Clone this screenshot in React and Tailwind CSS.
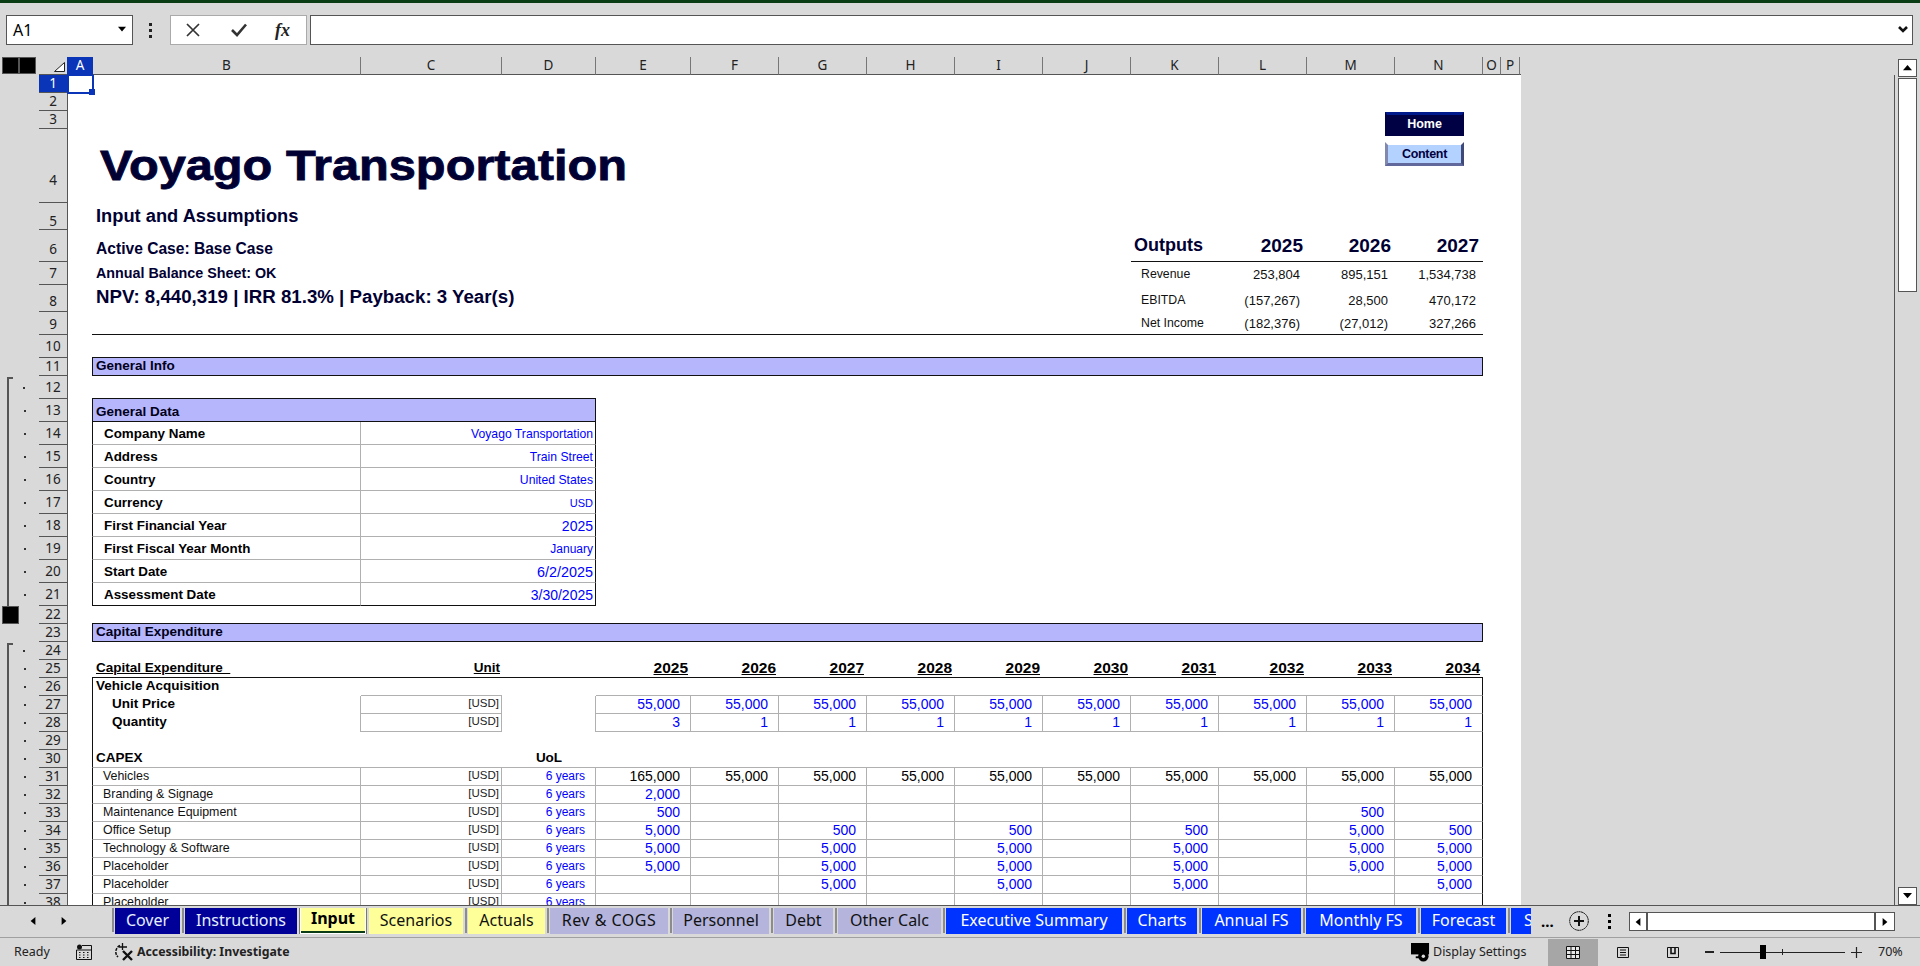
import React from "react";

const ARIAL = "font-['Liberation_Sans',Arial,sans-serif]";
const UI = "font-['Noto_Sans',sans-serif]";

const COLS = [
  ["A", "w-[26px]"], ["B", "w-[268px]"], ["C", "w-[141px]"], ["D", "w-[94px]"], ["E", "w-[95px]"],
  ["F", "w-[88px]"], ["G", "w-[88px]"], ["H", "w-[88px]"], ["I", "w-[88px]"], ["J", "w-[88px]"],
  ["K", "w-[88px]"], ["L", "w-[88px]"], ["M", "w-[88px]"], ["N", "w-[88px]"], ["O", "w-[18px]"], ["P", "w-[19px]"],
];

const GRID = "grid h-full w-[1453px] bg-white leading-none grid-rows-[minmax(0,1fr)] grid-cols-[24px_269px_141px_94px_95px_repeat(9,88px)_18px_20px]";

const TABS = [
  { name: "Cover", w: "w-[65px]", c: "bg-[#000099] text-[#e6f0ff]" },
  { name: "Instructions", w: "w-[112px]", c: "bg-[#000099] text-[#e6f0ff]" },
  { name: "Input", w: "w-[68px]", c: "", active: true },
  { name: "Scenarios", w: "w-[94px]", c: "bg-[#ffff99] text-[#111]" },
  { name: "Actuals", w: "w-[77px]", c: "bg-[#ffff99] text-[#111]" },
  { name: "Rev & COGS", w: "w-[118px]", c: "bg-[#b4b4dc] text-[#111] tracking-[0.5px]" },
  { name: "Personnel", w: "w-[96px]", c: "bg-[#b4b4dc] text-[#111]" },
  { name: "Debt", w: "w-[59px]", c: "bg-[#b4b4dc] text-[#111]" },
  { name: "Other Calc", w: "w-[103px]", c: "bg-[#b4b4dc] text-[#111]" },
  { name: "Executive Summary", w: "w-[176px]", c: "bg-[#0033ff] text-white" },
  { name: "Charts", w: "w-[70px]", c: "bg-[#0033ff] text-white" },
  { name: "Annual FS", w: "w-[99px]", c: "bg-[#0033ff] text-white" },
  { name: "Monthly FS", w: "w-[110px]", c: "bg-[#0033ff] text-white" },
  { name: "Forecast", w: "w-[85px]", c: "bg-[#0033ff] text-white" },
];

const GENERAL = [
  ["Company Name", "Voyago Transportation", "text-[12.2px]"],
  ["Address", "Train Street", "text-[12.2px]"],
  ["Country", "United States", "text-[12.2px]"],
  ["Currency", "USD", "text-[11px]"],
  ["First Financial Year", "2025", "text-[14px]"],
  ["First Fiscal Year Month", "January", "text-[12px]"],
  ["Start Date", "6/2/2025", "text-[14.4px]"],
  ["Assessment Date", "3/30/2025", "text-[14px]"],
];

const YEARS = ["2025", "2026", "2027", "2028", "2029", "2030", "2031", "2032", "2033", "2034"];
const F = "5,000";
const CAPEX = [
  ["Vehicles", ["165,000", "55,000", "55,000", "55,000", "55,000", "55,000", "55,000", "55,000", "55,000", "55,000"], true],
  ["Branding & Signage", ["2,000", "", "", "", "", "", "", "", "", ""]],
  ["Maintenance Equipment", ["500", "", "", "", "", "", "", "", "500", ""]],
  ["Office Setup", [F, "", "500", "", "500", "", "500", "", F, "500"]],
  ["Technology & Software", [F, "", F, "", F, "", F, "", F, F]],
  ["Placeholder", [F, "", F, "", F, "", F, "", F, F]],
  ["Placeholder", ["", "", F, "", F, "", F, "", "", F]],
  ["Placeholder", ["", "", "", "", "", "", "", "", "", ""]],
];

function Tri({ dir, className }) {
  const pts = { up: "0,7 5,1 10,7", down: "0,1 5,7 10,1", left: "8,0 8,10 2,5", right: "2,0 2,10 8,5" };
  return (
    <svg viewBox="0 0 10 10" className={className} fill="#000">
      <polygon points={pts[dir]} />
    </svg>
  );
}

function Row({ n, h, pb = "pb-[1px]", outline, dot, active, children }) {
  return (
    <div className={`flex shrink-0 ${h}`}>
      <div className="flex w-[39px] shrink-0 items-center">
        {outline === "line" && <div className="ml-[7px] h-full w-[2px] bg-[#555]" />}
        {outline === "start" && (
          <div className="ml-[7px] mt-[2px] h-full w-[6px] border-l-2 border-t-2 border-[#555]" />
        )}
        {outline === "end" && <div className="ml-[2px] h-full w-[17px] border border-[#555] bg-black" />}
        {dot && (
          <div className={`h-[2px] w-[2px] bg-[#333] ${outline === "start" ? "ml-[10px]" : "ml-[15px]"}`} />
        )}
      </div>
      <div
        className={`flex w-[29px] shrink-0 items-end justify-center border-r border-b border-r-[#555] border-b-[#555] text-[13.5px] leading-[16px] ${UI} ${pb} ${
          active ? "bg-[#0a35b8] text-white" : "text-[#222]"
        }`}
      >
        {n}
      </div>
      <div className={GRID}>{children}</div>
    </div>
  );
}

function Section({ title }) {
  return (
    <>
      <div />
      <div className="col-span-13 -mt-px flex items-center border border-[#111] bg-[#b6b6fc] pb-[2px] pl-[3px] text-[13.5px] font-bold text-[#00001a]">
        {title}
      </div>
    </>
  );
}

function YearCell({ v, blue, i }) {
  return (
    <div
      className={`flex items-center justify-end border-b border-r border-b-[#b0b0b0] pb-[2px] pr-[10px] text-[14px] ${
        i === 9 ? "border-r-[#111]" : "border-r-[#b0b0b0]"
      } ${blue ? "text-[#0000ff]" : "text-black"}`}
    >
      {v}
    </div>
  );
}

function Unit() {
  return (
    <div className="flex items-center justify-end border-b border-r border-[#b0b0b0] pb-[2px] pr-[2px] text-[11.5px] text-[#222]">
      [USD]
    </div>
  );
}

function Blank({ c = "" }) {
  return <div className={c} />;
}

function OutputRow({ label, vals, pt }) {
  return (
    <>
      <div className={`col-start-11 flex items-center pl-[10px] text-[12.3px] text-[#111] ${pt}`}>{label}</div>
      {vals.map((v, i) => (
        <div key={i} className={`flex items-center justify-end pr-[7px] text-[13px] text-[#111] ${pt}`}>
          {v}
        </div>
      ))}
    </>
  );
}

function Sheet() {
  return (
    <div className={`relative flex h-[830px] w-[1895px] flex-col overflow-hidden border-r border-[#555] ${ARIAL}`}>
      <Row n="1" h="h-[18px]" active><Blank /></Row>
      <Row n="2" h="h-[18px]"><Blank /></Row>
      <Row n="3" h="h-[18px]"><Blank /></Row>
      <Row n="4" h="h-[74px]" pb="pb-[14px]">
        <Blank />
        <div className="col-span-9 flex items-center pl-[8px]">
          <span className="origin-left scale-x-[1.16] whitespace-nowrap text-[42px] font-bold text-[#000033] [-webkit-text-stroke:0.8px_#000033]">
            Voyago Transportation
          </span>
        </div>
      </Row>
      <Row n="5" h="h-[27px]" pb="pb-[0px]">
        <Blank />
        <div className="col-span-5 flex items-center pl-[4px] text-[18.3px] font-bold text-[#000033]">
          Input and Assumptions
        </div>
      </Row>
      <Row n="6" h="h-[32px]" pb="pb-[4px]">
        <Blank />
        <div className="col-span-5 flex items-center pl-[4px] pt-[5px] text-[15.6px] font-bold text-[#000033]">
          Active Case: Base Case
        </div>
        <div className="col-start-11 flex items-center border-b border-[#111] pb-[1px] pl-[3px] text-[18px] font-bold text-[#000033]">
          Outputs
        </div>
        {["2025", "2026", "2027"].map((y) => (
          <div key={y} className="flex items-center justify-end border-b border-[#111] pb-[1px] pr-[4px] text-[19px] font-bold text-[#000033]">
            {y}
          </div>
        ))}
      </Row>
      <Row n="7" h="h-[23px]" pb="pb-[3px]">
        <Blank />
        <div className="col-span-5 flex items-center pl-[4px] text-[14.3px] font-bold text-[#000033]">
          Annual Balance Sheet: OK
        </div>
        <OutputRow label="Revenue" pt="pt-[2px]" vals={["253,804", "895,151", "1,534,738"]} />
      </Row>
      <Row n="8" h="h-[27px]" pb="pb-[2px]">
        <Blank />
        <div className="col-span-8 flex items-start pl-[4px] pt-[3px] text-[18.7px] font-bold text-[#000033]">
          NPV: 8,440,319 | IRR 81.3% | Payback: 3 Year(s)
        </div>
        <OutputRow label="EBITDA" pt="pt-[4px]" vals={["(157,267)", "28,500", "470,172"]} />
      </Row>
      <Row n="9" h="h-[23px]" pb="pb-[2px]">
        <Blank />
        <div className="col-span-9 border-b border-[#111]" />
        <div className="col-start-11 flex items-center border-b border-[#111] pl-[10px] text-[12.3px] text-[#111]">
          Net Income
        </div>
        {["(182,376)", "(27,012)", "327,266"].map((v) => (
          <div key={v} className="flex items-center justify-end border-b border-[#111] pr-[7px] text-[13px] text-[#111]">
            {v}
          </div>
        ))}
      </Row>
      <Row n="10" h="h-[23px]" pb="pb-[3px]"><Blank /></Row>
      <Row n="11" h="h-[18px]"><Section title="General Info" /></Row>
      <Row n="12" h="h-[23px]" pb="pb-[3px]" outline="start" dot><Blank /></Row>
      <Row n="13" h="h-[23px]" pb="pb-[3px]" outline="line" dot>
        <Blank />
        <div className="col-span-3 -mt-px flex items-center border border-[#111] bg-[#b6b6fc] pl-[3px] pt-[4px] text-[13.5px] font-bold text-[#00001a]">
          General Data
        </div>
      </Row>
      {GENERAL.map(([label, val, size], i) => {
        const last = i === GENERAL.length - 1;
        return (
          <Row key={label} n={14 + i} h="h-[23px]" pb="pb-[3px]" outline="line" dot>
            <Blank />
            <div
              className={`flex items-center border-b border-l border-r border-l-[#111] border-r-[#b0b0b0] pl-[11px] pt-[2px] text-[13.4px] font-bold text-black ${
                last ? "border-b-[#111]" : "border-b-[#b0b0b0]"
              }`}
            >
              {label}
            </div>
            <div
              className={`col-span-2 flex items-center justify-end border-b border-r border-r-[#111] pr-[2px] pt-[2px] text-[#0000ff] ${size} ${
                last ? "border-b-[#111]" : "border-b-[#b0b0b0]"
              }`}
            >
              {val}
            </div>
          </Row>
        );
      })}
      <Row n="22" h="h-[18px]" outline="end"><Blank /></Row>
      <Row n="23" h="h-[18px]"><Section title="Capital Expenditure" /></Row>
      <Row n="24" h="h-[18px]" outline="start" dot><Blank /></Row>
      <Row n="25" h="h-[18px]" outline="line" dot>
        <Blank />
        <div className="flex items-center whitespace-pre border-b border-[#111] pb-[2px] pl-[4px] text-[13.5px] font-bold text-black underline">
          {"Capital Expenditure  "}
        </div>
        <div className="flex items-center justify-end border-b border-[#111] pb-[2px] pr-[2px] text-[13.5px] font-bold text-black underline">
          Unit
        </div>
        <div className="border-b border-[#111]" />
        {YEARS.map((y) => (
          <div key={y} className="flex items-center justify-end border-b border-[#111] pb-[2px] pr-[3px] text-[15.5px] font-bold text-black underline">
            {y}
          </div>
        ))}
      </Row>
      <Row n="26" h="h-[18px]" outline="line" dot>
        <Blank />
        <div className="flex items-center border-l border-[#111] pb-[2px] pl-[3px] text-[13.5px] font-bold text-black">
          Vehicle Acquisition
        </div>
        <div className="border-b border-[#b0b0b0]" />
        <div />
        {YEARS.map((y, i) => (
          <div key={y} className={`border-b border-b-[#b0b0b0] ${i === 9 ? "border-r border-r-[#111]" : ""}`} />
        ))}
      </Row>
      {[
        ["Unit Price", ["55,000", "55,000", "55,000", "55,000", "55,000", "55,000", "55,000", "55,000", "55,000", "55,000"]],
        ["Quantity", ["3", "1", "1", "1", "1", "1", "1", "1", "1", "1"]],
      ].map(([label, vals], r) => (
        <Row key={label} n={27 + r} h="h-[18px]" outline="line" dot>
          <Blank />
          <div className="flex items-center border-l border-r border-l-[#111] border-r-[#b0b0b0] pb-[2px] pl-[19px] text-[13.5px] font-bold text-black">
            {label}
          </div>
          <Unit />
          <div className="border-r border-[#b0b0b0]" />
          {vals.map((v, i) => (
            <YearCell key={i} v={v} i={i} blue />
          ))}
        </Row>
      ))}
      <Row n="29" h="h-[18px]" outline="line" dot>
        <Blank />
        <div className="col-span-13 border-x border-x-[#111]" />
      </Row>
      <Row n="30" h="h-[18px]" outline="line" dot>
        <Blank />
        <div className="flex items-center border-b border-l border-b-[#b0b0b0] border-l-[#111] pb-[2px] pl-[3px] text-[13.5px] font-bold text-black">
          CAPEX
        </div>
        <div className="border-b border-[#b0b0b0]" />
        <div className="flex items-center justify-center border-b border-[#b0b0b0] pb-[2px] text-[13.5px] font-bold text-black">
          UoL
        </div>
        {YEARS.map((y, i) => (
          <div key={y} className={`border-b border-b-[#b0b0b0] ${i === 9 ? "border-r border-r-[#111]" : ""}`} />
        ))}
      </Row>
      {CAPEX.map(([label, vals, black], r) => (
        <Row key={r} n={31 + r} h="h-[18px]" outline="line" dot>
          <Blank />
          <div className="flex items-center border-b border-l border-r border-b-[#b0b0b0] border-l-[#111] border-r-[#b0b0b0] pb-[1px] pl-[10px] text-[12.4px] text-[#111]">
            {label}
          </div>
          <Unit />
          <div className="flex items-center justify-end border-b border-r border-[#b0b0b0] pb-[2px] pr-[10px] text-[12px] text-[#0000ff]">
            6 years
          </div>
          {vals.map((v, i) => (
            <YearCell key={i} v={v} i={i} blue={!black} />
          ))}
        </Row>
      ))}

      {/* active cell */}
      <div className="absolute left-[67px] top-[-1px] h-[20px] w-[27px] border-[2px] border-[#0a35b8]" />
      <div className="absolute left-[89px] top-[14px] h-[6px] w-[6px] bg-[#0a35b8]" />

      {/* shapes sitting on the sheet */}
      <div className="absolute left-[1385px] top-[37px] flex h-[24px] w-[79px] items-center justify-center border-[2px] border-t-[3px] border-[#000044] border-t-[#001a8c] bg-[#000044] text-[12.5px] font-bold leading-none text-white">
        Home
      </div>
      <div className="absolute left-[1385px] top-[67px] flex h-[24px] w-[79px] items-center justify-center border-[3px] border-t-white border-r-[#404878] border-b-[#60689c] border-l-[#8088b0] bg-[#b4d2ff] text-[12.5px] font-bold leading-none tracking-[-0.3px] text-[#000040]">
        Content
      </div>
    </div>
  );
}

function ColumnHeader() {
  return (
    <div className={`flex h-[18px] shrink-0 text-[13.5px] leading-[17px] text-[#222] ${UI}`}>
      <div className="flex w-[39px] shrink-0 items-start pl-[2px]">
        <div className="h-[17px] w-[17px] border border-[#555] bg-black" />
        <div className="h-[17px] w-[17px] border border-[#555] bg-black" />
      </div>
      <div className="flex w-[28px] shrink-0 items-start justify-end border-b border-[#555] pr-[2px] pt-[5px]">
        <svg viewBox="0 0 11 10" className="h-[10px] w-[11px]">
          <polygon points="10.5,0.5 10.5,9.5 0.5,9.5" fill="#fff" stroke="#222" strokeWidth="1" />
        </svg>
      </div>
      {COLS.map(([name, w]) => (
        <div
          key={name}
          className={`flex shrink-0 justify-center ${w} ${
            name === "A" ? "bg-[#0a35b8] text-white" : "border-r border-r-[#777] border-b border-b-[#555]"
          }`}
        >
          {name}
        </div>
      ))}
      <div className="w-[1px] border-b border-[#555]" />
    </div>
  );
}

function VScroll() {
  return (
    <div className="flex h-[848px] w-[25px] shrink-0 flex-col pl-[3px] pt-[2px]">
      <div className="flex h-[18px] w-[19px] items-center justify-center border border-[#555] bg-white">
        <Tri dir="up" className="h-[9px] w-[9px]" />
      </div>
      <div className="mt-[1px] h-[214px] w-[19px] border border-[#555] bg-white" />
      <div className="flex-1" />
      <div className="flex h-[18px] w-[19px] items-center justify-center border border-[#555] bg-white">
        <Tri dir="down" className="h-[9px] w-[9px]" />
      </div>
    </div>
  );
}

function TabBar() {
  return (
    <div className={`flex h-[32px] shrink-0 items-start border-t border-[#555] pt-[2px] ${UI}`}>
      <div className="flex h-[26px] w-[112px] shrink-0 items-center pl-[29px]">
        <Tri dir="left" className="h-[10px] w-[8px]" />
        <Tri dir="right" className="ml-[23px] h-[10px] w-[8px]" />
      </div>
      <div className="flex h-[26px] w-[1419px] shrink-0 items-start overflow-hidden">
        <div className="mr-[1px] h-[24px] w-[2px] shrink-0 bg-[#8c8c8c]" />
        {TABS.map((t, i) => (
          <React.Fragment key={t.name}>
            {t.active ? (
              <div className={`-mt-[2px] flex h-[28px] shrink-0 flex-col border-x border-x-[#777] bg-white px-[1px] ${t.w}`}>
                <div className="flex h-[25px] items-center justify-center bg-[#ffff99] pb-[2px] text-[16px] font-bold leading-none text-black">
                  {t.name}
                </div>
                <div className="h-[2px] bg-[#0b3d14]" />
              </div>
            ) : (
              <div className={`flex h-[26px] shrink-0 items-center justify-center pb-[3px] text-[16px] leading-none ${t.w} ${t.c}`}>{t.name}</div>
            )}
            {!t.active && !TABS[i + 1]?.active && <div className="mx-[1.5px] h-[25px] w-[2px] shrink-0 bg-[#8c8c8c]" />}
            {(t.active || TABS[i + 1]?.active) && <div className="w-[2px] shrink-0" />}
          </React.Fragment>
        ))}
        <div className="flex h-[26px] w-[20px] shrink-0 items-center overflow-hidden bg-[#0033ff] pb-[3px] pl-[13px] text-[16px] leading-none text-white">S</div>
      </div>
      <div className="ml-[10px] flex h-[26px] w-[26px] shrink-0 items-center text-[15px] font-bold text-black">...</div>
      <div className="ml-[2px] flex h-[26px] items-center">
        <svg viewBox="0 0 20 20" className="h-[20px] w-[20px]" fill="none" stroke="#111">
          <circle cx="10" cy="10" r="9.3" strokeWidth="1" strokeDasharray="2 .4" />
          <path d="M10 5v10M5 10h10" strokeWidth="2" />
        </svg>
      </div>
      <div className="ml-[19px] flex h-[26px] flex-col items-center justify-center gap-[3px]">
        <div className="h-[3px] w-[3px] bg-black" />
        <div className="h-[3px] w-[3px] bg-black" />
        <div className="h-[3px] w-[3px] bg-black" />
      </div>
      <div className="ml-[18px] mt-[4px] flex h-[19px] w-[266px] shrink-0 border border-[#555] bg-white">
        <div className="flex w-[18px] items-center justify-center border-r-2 border-[#555]">
          <Tri dir="left" className="h-[10px] w-[8px]" />
        </div>
        <div className="flex-1" />
        <div className="flex w-[20px] items-center justify-center border-l-2 border-[#555]">
          <Tri dir="right" className="h-[10px] w-[8px]" />
        </div>
      </div>
    </div>
  );
}

function StatusBar() {
  return (
    <div className={`flex h-[29px] shrink-0 items-center whitespace-nowrap border-t border-[#a0a0a0] text-[12.5px] text-[#222] ${UI}`}>
      <div className="flex w-[1411px] shrink-0 items-center">
        <span className="ml-[14px] w-[36px]">Ready</span>
        <svg viewBox="0 0 16 16" className="ml-[26px] h-[16px] w-[16px]" fill="none" stroke="#111">
          <circle cx="3.5" cy="3" r="2.5" fill="#111" stroke="none" />
          <path d="M6 1.5h9.5v14H.5V6h15" strokeWidth="1" />
          <path d="M3 8.5h1.5M7 8.5h1.5M11 8.5h1.5M3 11h1.5M7 11h1.5M11 11h1.5M3 13.5h1.5M7 13.5h1.5M11 13.5h1.5" strokeWidth="1.2" />
        </svg>
        <svg viewBox="0 0 20 18" className="ml-[22px] h-[18px] w-[20px]" fill="none" stroke="#111">
          <path d="M6 2.5A7 7 0 0 0 4 14" strokeWidth="1.5" strokeDasharray="3 1" />
          <path d="M8.5 0v7M5 4h8" strokeWidth="1.3" />
          <path d="M9 8l9 9M18 8l-9 9" strokeWidth="2.4" />
        </svg>
        <span className="ml-[3px] text-[12.3px] font-bold">Accessibility: Investigate</span>
      </div>
      <svg viewBox="0 0 20 20" className="h-[19px] w-[19px] shrink-0" fill="#000">
        <rect x="0" y="0" width="19" height="12" />
        <rect x="5" y="14" width="5" height="2" />
        <circle cx="13" cy="14" r="5.5" />
        <circle cx="13" cy="14" r="1.8" fill="#d9d9d9" />
      </svg>
      <span className="ml-[3px] w-[91px] shrink-0">Display Settings</span>
      <div className="ml-[24px] flex h-[27px] w-[50px] shrink-0 items-center justify-center bg-[#a6a6a6]">
        <svg viewBox="0 0 14 13" className="h-[13px] w-[14px] bg-[#e6e6e6]" fill="none" stroke="#111">
          <path d="M.5.5h13v12H.5zM.5 4.500h13M.5 8.500h13M5 .5v12M9.500 .5v12" strokeWidth="1" />
        </svg>
      </div>
      <svg viewBox="0 0 12 11" className="ml-[19px] h-[11px] w-[12px] shrink-0" fill="none" stroke="#111">
        <path d="M.5.5h11v10H.5z" strokeWidth="1" />
        <path d="M3 3h6M3 5.500h6M3 8h6" strokeWidth="1" />
      </svg>
      <svg viewBox="0 0 12 11" className="ml-[38px] h-[11px] w-[12px] shrink-0" fill="none" stroke="#111">
        <path d="M.5.5h11v10H.5z" strokeWidth="1" />
        <path d="M4 .5v6h4v-6" strokeWidth="1.6" />
      </svg>
      <div className="ml-[26px] h-[1.5px] w-[9px] shrink-0 bg-[#222]" />
      <div className="ml-[6px] flex h-[14px] w-[125px] shrink-0 items-center">
        <div className="h-[1px] w-[40px] bg-[#222]" />
        <div className="h-[14px] w-[6px] bg-black" />
        <div className="h-[1px] w-[16px] bg-[#222]" />
        <div className="h-[6px] w-[1px] bg-[#222]" />
        <div className="h-[1px] flex-1 bg-[#222]" />
      </div>
      <svg viewBox="0 0 11 11" className="ml-[6px] h-[11px] w-[11px] shrink-0" stroke="#222">
        <path d="M5.500 0v11M0 5.500h11" strokeWidth="1.2" />
      </svg>
      <span className="ml-[16px]">70%</span>
    </div>
  );
}

export default function App() {
  return (
    <div className="flex h-[966px] w-[1920px] flex-col overflow-hidden bg-[#d9d9d9]">
      <div className="h-[3px] shrink-0 bg-[#0b3d14]" />
      {/* formula bar */}
      <div className={`flex h-[54px] shrink-0 items-start pt-[12px] ${UI}`}>
        <div className="ml-[6px] flex h-[30px] w-[127px] items-center border border-[#555] bg-white pl-[6px] pr-[6px] text-[16px] text-black">
          <span className="flex-1">A1</span>
          <Tri dir="down" className="h-[8px] w-[8px]" />
        </div>
        <div className="ml-[16px] flex h-[30px] flex-col justify-center gap-[3px]">
          <div className="h-[3px] w-[3px] bg-[#222]" />
          <div className="h-[3px] w-[3px] bg-[#222]" />
          <div className="h-[3px] w-[3px] bg-[#222]" />
        </div>
        <div className="ml-[18px] flex h-[30px] w-[137px] items-center border border-[#aaa] bg-white pl-[15px]">
          <svg viewBox="0 0 14 14" className="h-[14px] w-[14px]" stroke="#333" fill="none">
            <path d="M1 1l12 12M13 1L1 13" strokeWidth="1.7" />
          </svg>
          <svg viewBox="0 0 16 14" className="ml-[31px] h-[14px] w-[16px]" stroke="#333" fill="none">
            <path d="M1 7l5 5L15 1.500" strokeWidth="2.6" />
          </svg>
          <span className="ml-[28px] font-['Liberation_Serif',serif] text-[18px] font-bold italic leading-none text-[#222]">
            fx
          </span>
        </div>
        <div className="ml-[3px] flex h-[30px] w-[1603px] items-center justify-end border border-[#555] bg-white pr-[4px]">
          <svg viewBox="0 0 10 8" className="h-[8px] w-[10px]" fill="none" stroke="#111">
            <path d="M1 1l4 4 4-4" strokeWidth="2.600" />
          </svg>
        </div>
      </div>
      {/* grid */}
      <div className="flex h-[848px] shrink-0">
        <div className="flex w-[1895px] shrink-0 flex-col">
          <ColumnHeader />
          <Sheet />
        </div>
        <VScroll />
      </div>
      <TabBar />
      <StatusBar />
    </div>
  );
}
